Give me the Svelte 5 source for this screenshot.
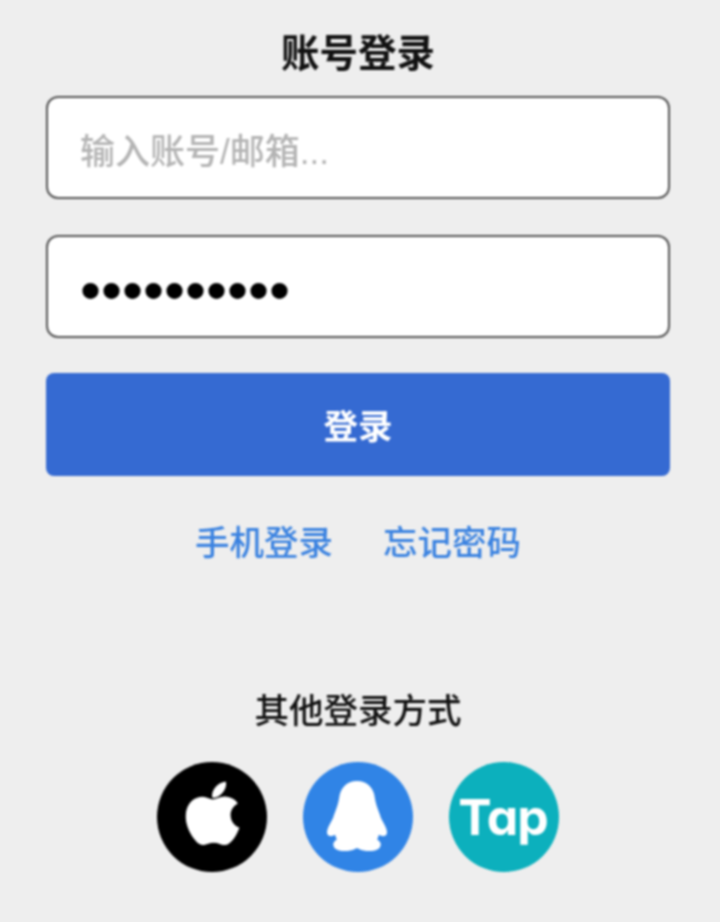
<script>
let account = $state('');
let password = $state('1234567890');
</script>

<main>
	<h1>账号登录</h1>
	<input class="field" type="text" placeholder="输入账号/邮箱..." bind:value={account} />
	<input class="field secret" type="password" bind:value={password} />
	<button class="submit">登录</button>

	<div class="links">
		<a href="#phone">手机登录</a>
		<a href="#forgot">忘记密码</a>
	</div>

	<p class="other">其他登录方式</p>
	<div class="providers">
		<button class="provider apple" aria-label="Apple">
			<svg viewBox="0 0 24 24" width="83" height="83">
				<path fill="#fff" stroke="#fff" stroke-width="0.3" d="M17.05 20.28c-.98.95-2.05.8-3.08.35-1.09-.46-2.09-.48-3.24 0-1.44.62-2.2.44-3.06-.35C2.79 15.25 3.51 7.59 9.05 7.31c1.35.07 2.29.74 3.08.8 1.18-.24 2.31-.93 3.57-.84 1.51.12 2.65.72 3.4 1.8-3.12 1.87-2.38 5.98.48 7.13-.57 1.5-1.31 2.99-2.54 4.09zM12.03 7.25c-.15-2.23 1.66-4.07 3.74-4.25.29 2.58-2.34 4.5-3.74 4.25z" />
			</svg>
		</button>
		<button class="provider qq" aria-label="QQ">
			<svg viewBox="-1 -1 60 70" width="60" height="70">
				<path fill="#fff" stroke="#fff" stroke-width="2" stroke-linejoin="round" d="M29 0C19 0 13 7 12 17C11 24 8 30 6 36C4 41 0 46 0 50C0 54 4 54 8 51C8 54 9 56 10 58C6 60 5 63 8 66C12 69 23 69 29 65C35 69 46 69 50 66C53 63 52 60 48 58C49 56 50 54 50 51C54 54 58 54 58 50C58 46 54 41 52 36C50 30 47 24 46 17C45 7 39 0 29 0Z" />
			</svg>
		</button>
		<button class="provider tap">Tap</button>
	</div>
</main>

<style>
:global(body) {
	background: #eeeeee;
}

main {
	display: flex;
	flex-direction: column;
	align-items: center;
	height: 922px;
	padding: 0 50px 0 46px;
	box-sizing: border-box;
	font-family: "Liberation Sans", "Noto Sans CJK SC", sans-serif;
	filter: blur(0.8px);
}

h1 {
	margin: 32px 0 20px;
	font-size: 38.5px;
	line-height: 44px;
	font-weight: 700;
	color: #111;
}

.field {
	display: block;
	width: 100%;
	height: 103px;
	box-sizing: border-box;
	margin-bottom: 36px;
	padding: 8px 32px 0;
	border: 2px solid #555;
	border-radius: 12px;
	background: #fff;
	font-family: inherit;
	font-size: 35px;
	font-weight: 500;
	color: #000;
	outline: none;
}

.field::placeholder {
	color: #b4b4b4;
}

.secret {
	padding-top: 8px;
	padding-left: 32px;
	font-size: 60px;
	margin-bottom: 35px;
}

.submit {
	width: 100%;
	height: 103px;
	padding-bottom: 2px;
	border: none;
	border-radius: 8px;
	background: #356ad2;
	color: #fff;
	font-family: inherit;
	font-size: 34.5px;
	font-weight: 700;
}

.links {
	display: flex;
	gap: 50px;
	margin-top: 46px;
	font-size: 34.5px;
	font-weight: 500;
	line-height: 42px;
}

.links a {
	color: #3a82e0;
	text-decoration: none;
}

.other {
	margin: 126px 0 0;
	font-size: 34.5px;
	font-weight: 500;
	line-height: 42px;
	color: #111;
}

.providers {
	display: flex;
	gap: 36px;
	margin-top: 30px;
}

.provider {
	display: flex;
	align-items: center;
	justify-content: center;
	width: 110px;
	height: 110px;
	padding: 0;
	border: none;
	border-radius: 50%;
}

.apple {
	background: #000;
}

.apple svg {
	margin-top: -8px;
}

.qq {
	background: #3084e6;
}

.qq svg {
	margin-top: -2px;
	margin-left: -3px;
}

.tap {
	padding-right: 2px;
	background: #0cb0bd;
	color: #fff;
	font-family: Inter, sans-serif;
	font-size: 50px;
	font-weight: 700;
	font-feature-settings: "cv11";
	letter-spacing: -1px;
}
</style>
